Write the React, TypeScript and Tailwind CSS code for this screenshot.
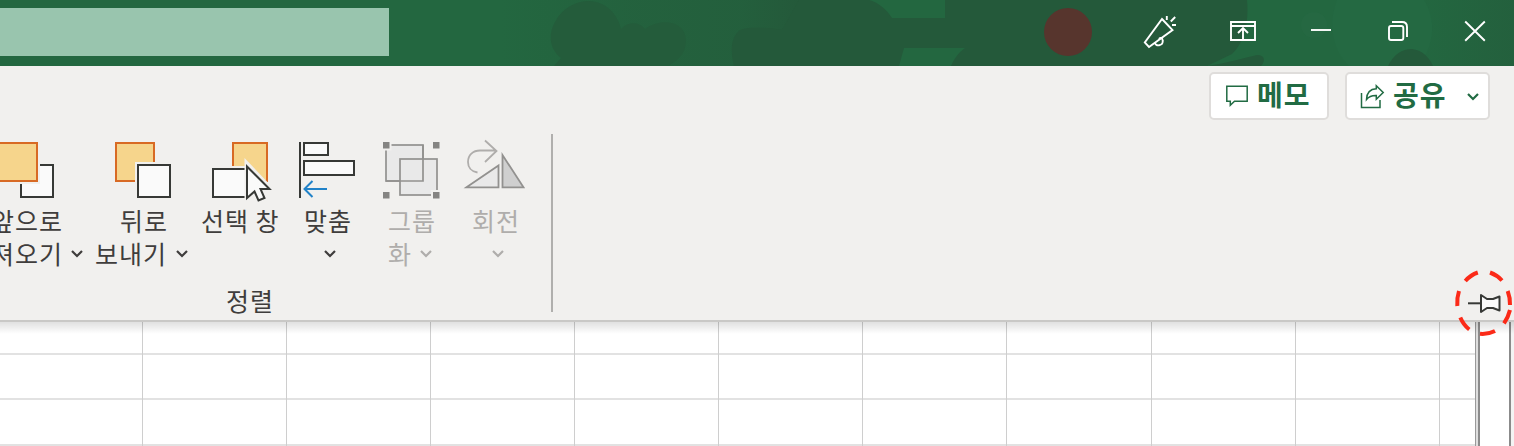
import type { ReactNode } from "react";

function TitlePattern() {
  return (
    <svg className="absolute inset-0" width="1514" height="66" viewBox="0 0 1514 66" aria-hidden="true">
      <defs>
        <linearGradient id="shade" x1="0" x2="1">
          <stop offset="0" stopColor="#24593a" stopOpacity="0" />
          <stop offset="0.45" stopColor="#24593a" stopOpacity="0.4" />
          <stop offset="0.8" stopColor="#24593a" stopOpacity="0.55" />
          <stop offset="1" stopColor="#24593a" stopOpacity="1" />
        </linearGradient>
        <linearGradient id="edge" x1="0" x2="1">
          <stop offset="0" stopColor="#24593a" stopOpacity="0" />
          <stop offset="1" stopColor="#24593a" stopOpacity="0.5" />
        </linearGradient>
      </defs>
      <rect x="500" width="300" height="66" fill="url(#shade)" />
      <path d="M554 66 L561 58 C548 48 549 32 555 22 C562 8 576 1 589 1 C606 1 618 15 621 29 C629 21 639 22 645 29 C653 23 664 21 671 23 C684 25 689 38 684 51 C680 59 673 63 668 66Z" fill="#245c3b" />
      <path d="M734 66 C730 50 731 37 740 30 C748 26 770 28 782 30 L799 0 H869 C878 2 887 10 892 18 H945 V0 H1247 C1249 20 1245 42 1232 54 L1207 66 H951 C954 59 959 52 965 48 H904 L899 66Z" fill="#24593a" />
      <path d="M1207 66 C1227 63 1244 58 1257 55 C1266 55 1265 62 1261 66Z" fill="#24593a" />
      <circle cx="1314" cy="25" r="13" fill="#286c46" opacity="0.4" />
      <rect x="1420" width="94" height="66" fill="url(#edge)" />
      <path d="M1337 0 C1329 20 1330 48 1349 66 H1418 C1434 48 1437 20 1424 0Z" fill="#246942" />
      <path d="M1388 66 C1394 54 1402 49 1412 49 C1422 50 1429 57 1433 66Z" fill="#24593a" />
    </svg>
  );
}

function Chevron({ className = "" }: { className?: string }) {
  return (
    <svg className={className} width="14" height="10" viewBox="0 0 14 10" fill="none" stroke="currentColor" strokeWidth="2.2">
      <path d="M2 2 L7 7 L12 2" />
    </svg>
  );
}

function TitleBar() {
  return (
    <header className="relative h-[66px] shrink-0 bg-[#236740]">
      <TitlePattern />
      <div className="relative flex h-full pt-2">
        <div className="h-12 w-[389px] bg-[#99c5ae]" />
        <div className="ml-[655px] size-12 rounded-full bg-[#57352d]" />
        <svg className="ml-12" width="40" height="48" viewBox="1140 8 40 48" fill="none" stroke="#fff" strokeWidth="1.9">
          <path d="M1162 19 L1172.5 30 L1149 47 L1144.8 42.5Z" />
          <path d="M1155 42.5 C1155 47 1163.5 46 1162.7 40.5 C1162.4 37.8 1160.5 37.3 1159 39" />
          <path d="M1166.8 16 V20 M1170.8 21.5 L1175.2 17 M1172 25 H1176" />
        </svg>
        <svg className="ml-12" width="30" height="48" viewBox="1228 8 30 48" fill="none" stroke="#fff" strokeWidth="1.9">
          <path d="M1231 22 H1255 V40 H1231Z M1231 26 H1255 M1243 39.5 V28.5 M1238 33 L1243 28 L1248 33" />
        </svg>
        <svg className="ml-[50px]" width="28" height="48" viewBox="1308 8 28 48" stroke="#fff" strokeWidth="1.9">
          <path d="M1311 30 H1331" />
        </svg>
        <svg className="ml-12" width="30" height="48" viewBox="1384 8 30 48" fill="none" stroke="#fff" strokeWidth="1.9">
          <rect x="1389" y="26" width="14.3" height="14" rx="2" />
          <path d="M1392 22 H1402 Q1407 22 1407 27 V37" />
        </svg>
        <svg className="ml-12" width="28" height="48" viewBox="1462 8 28 48" stroke="#fff" strokeWidth="1.9">
          <path d="M1465.2 21.5 L1484.8 40.8 M1484.8 21.5 L1465.2 40.8" />
        </svg>
      </div>
    </header>
  );
}

function TopActions() {
  return (
    <div className="flex h-[54px] justify-end gap-4 pt-1.5 pr-6 text-[28px] leading-[42px] font-bold tracking-[1px] text-[#216b43]">
      <button className="flex h-12 w-[120px] items-center rounded-[5px] border-2 border-[#dfdddb] bg-white pl-3.5">
        <svg width="24" height="24" viewBox="1225 84 24 24" fill="none" stroke="currentColor" strokeWidth="1.5">
          <path d="M1226.8 86.3 H1247.2 V101.2 H1234.5 L1230.3 105.3 V101.2 H1226.8Z" />
        </svg>
        <span className="ml-[8px] pb-[4px] whitespace-nowrap">메모</span>
      </button>
      <button className="flex h-12 w-[145px] items-center rounded-[5px] border-2 border-[#dfdddb] bg-white pl-3">
        <svg width="26" height="26" viewBox="1359 83 26 26" fill="none" stroke="currentColor" strokeWidth="1.5">
          <path d="M1361.5 93 V107.5 H1380 V100" />
          <path d="M1366.5 99.5 C1366.8 92.5 1370.5 89 1376.3 88.8 V85.8 L1383.2 92.5 L1376.3 99.2 V95.5 C1371.5 95.3 1368.7 96.8 1366.5 99.5Z" />
        </svg>
        <span className="ml-[8px] pb-[4px] whitespace-nowrap">공유</span>
        <Chevron className="mt-0.5 ml-[19px]" />
      </button>
    </div>
  );
}

function Tool({ className, icon, children }: { className: string; icon: ReactNode; children: ReactNode }) {
  return (
    <button className={`flex shrink-0 flex-col items-start text-left ${className}`}>
      {icon}
      <span className="block whitespace-pre leading-[33px]">{children}</span>
    </button>
  );
}

function ArrangeGroup() {
  return (
    <section className="flex h-[200px] text-[25px] tracking-[1px] text-[#3f3d3c]">
      <div className="flex w-[551px] flex-col overflow-hidden">
        <div className="flex h-[162px] pt-[14px]">
          <Tool
            className="-ml-[35px] w-[130px]"
            icon={
              <svg width="130" height="70" viewBox="-35 134 130 70" strokeWidth="2">
                <rect x="21" y="165" width="32" height="32" fill="#fafafa" stroke="#373936" />
                <rect x="-20" y="140" width="60" height="44" fill="#f1f0ee" />
                <rect x="-1" y="143" width="38" height="38" fill="#f6d58c" stroke="#d86a24" />
              </svg>
            }
          >
            <span className="block w-[98px] text-right">앞으로</span>
            <span className="flex h-8 items-center">
              <span className="w-[98px] text-right">가져오기</span>
              <Chevron className="mt-0.5 ml-[7px]" />
            </span>
          </Tool>
          <Tool
            className="w-[105px]"
            icon={
              <svg width="105" height="70" viewBox="95 134 105 70" strokeWidth="2">
                <rect x="116" y="143" width="38" height="38" fill="#f6d58c" stroke="#d86a24" />
                <rect x="135" y="162" width="40" height="40" fill="#f1f0ee" />
                <rect x="138" y="165" width="32" height="32" fill="#fafafa" stroke="#373936" />
              </svg>
            }
          >
            <span className="block pl-[25px]">뒤로</span>
            <span className="flex h-8 items-center">
              <span className="w-[72px]">보내기</span>
              <Chevron className="mt-0.5 ml-[8px]" />
            </span>
          </Tool>
          <Tool
            className="w-[96px]"
            icon={
              <svg width="96" height="70" viewBox="200 134 96 70" strokeWidth="2">
                <rect x="233" y="143" width="34" height="38" fill="#f6d58c" stroke="#d86a24" />
                <path d="M209 166 H249 V200 H209Z" fill="#f1f0ee" />
                <rect x="213" y="169" width="34" height="28" fill="#fafafa" stroke="#373936" />
                <path d="M244.5 158 L275 190 H264 L269 201 L257 205 L252 195 L244.5 202Z" fill="#f1f0ee" />
                <path d="M247 166.5 L269.5 189 H260.5 L264.5 198 L258.5 200.5 L254.5 191.5 L247 198Z" fill="#fafafa" stroke="#373936" />
              </svg>
            }
          >
            <span className="block pl-px">선택 창</span>
          </Tool>
          <Tool
            className="w-[84px]"
            icon={
              <svg width="84" height="70" viewBox="296 134 84 70" fill="#fafafa" stroke="#373936" strokeWidth="2">
                <path d="M300 142 V198" />
                <rect x="304" y="143" width="24" height="12" />
                <rect x="304" y="161" width="50" height="14" />
                <path d="M327 189 H304 M312.5 181 L304.5 189 L312.5 197" fill="none" stroke="#2182c8" />
              </svg>
            }
          >
            <span className="block pl-[8px]">맞춤</span>
            <span className="flex h-8 items-center pl-[27px]">
              <Chevron className="mt-0.5" />
            </span>
          </Tool>
          <Tool
            className="w-[80px] text-[#afadab]"
            icon={
              <svg width="80" height="70" viewBox="380 134 80 70" fill="#e9e9e9" stroke="#92918f" strokeWidth="1.7">
                <rect x="386" y="145" width="37" height="36" />
                <rect x="400" y="159" width="37" height="36" />
                <path d="M386 181 H423 V145" fill="none" />
                <g fill="#858482" stroke="#f1f0ee" strokeWidth="4" paintOrder="stroke">
                  <path d="M383 142 h6.5 v6.5 h-6.5Z M433 142 h6.5 v6.5 h-6.5Z M383 192 h6.5 v6.5 h-6.5Z M433 192 h6.5 v6.5 h-6.5Z" />
                </g>
              </svg>
            }
          >
            <span className="block pl-[8px]">그룹</span>
            <span className="flex h-8 items-center pl-[8px]">
              <span className="w-6">화</span>
              <Chevron className="mt-0.5 ml-[7px]" />
            </span>
          </Tool>
          <Tool
            className="w-[80px] text-[#afadab]"
            icon={
              <svg width="80" height="70" viewBox="460 134 80 70" fill="none" strokeWidth="1.8">
                <path d="M477.5 172.5 C471 171.5 468 167 468 162 C468 155 473 150.5 480 150.5 H496 M485 140.5 L496.5 151 L485 162" stroke="#afadab" />
                <path d="M466.5 187.3 L498.5 165.5 V187.3Z" fill="#e9e9e9" stroke="#92918f" />
                <path d="M502.5 155 V187.3 H523.5Z" fill="#cfcfcf" stroke="#92918f" />
              </svg>
            }
          >
            <span className="block pl-[12px]">회전</span>
            <span className="flex h-8 items-center pl-[31px]">
              <Chevron className="mt-0.5" />
            </span>
          </Tool>
        </div>
        <div className="pl-[226px] leading-10">정렬</div>
      </div>
      <div className="mt-[14px] h-[178px] w-[2px] bg-[#b0afad]" />
    </section>
  );
}

function PinButton() {
  return (
    <svg className="absolute top-[266px] right-0 z-10" width="64" height="76" viewBox="1450 266 64 76" fill="none">
      <path d="M1468 303.3 H1480" stroke="#373936" strokeWidth="2" />
      <path d="M1481 295 L1487 299 H1493 L1499.5 296.5 V310.5 L1493 308 H1487 L1481 312Z" fill="#fafafa" stroke="#373936" strokeWidth="2" strokeLinejoin="round" />
      <g stroke="#fb2a18" strokeWidth="4">
        <path d="M1465.3 281 Q1470.5 275 1477.8 272.5" />
        <path d="M1490 272.5 Q1497 275 1502 280.5" />
        <path d="M1459 291 Q1456.7 298 1457.3 306" />
        <path d="M1507.7 291 Q1510.3 298 1510 305" />
        <path d="M1460.3 317.5 Q1463.5 325 1469.3 329.5" />
        <path d="M1510 310 Q1508.3 317 1504 323.3" />
        <path d="M1480 333.8 Q1488 334.5 1495 331" />
      </g>
    </svg>
  );
}

const columns = [
  "w-[143px]", "w-[144px]", "w-[144px]", "w-[144px]", "w-[144px]",
  "w-[144px]", "w-[144px]", "w-[145px]", "w-[144px]", "w-[144px]",
];
const rows = ["h-[33px]", "h-[45px]", "h-[46px]"];

function Sheet() {
  return (
    <main className="relative flex h-[124px] bg-white">
      <div className="w-[1475px]">
        {rows.map((height, r) => (
          <div key={r} className={`flex border-b-2 border-[#e2e2e2] ${height}`}>
            {columns.map((width, c) => (
              <div key={c} className={`-mb-[2px] shrink-0 border-r border-[#cecece] ${width}`} />
            ))}
          </div>
        ))}
      </div>
      <div className="flex w-[39px] bg-[#f4f4f4]">
        <div className="w-px bg-[#999]" />
        <div className="w-[2px] bg-[#dedede]" />
        <div className="w-[33px] border-x-2 border-[#8b8b8b] bg-white" />
      </div>
      <div className="absolute inset-x-0 top-0 h-3 bg-linear-to-b from-black/12 to-transparent" />
    </main>
  );
}

export default function App() {
  return (
    <div className="relative flex h-[446px] w-[1514px] flex-col overflow-hidden bg-[#f1f0ee] font-['Noto_Sans_CJK_KR',sans-serif]">
      <TitleBar />
      <div className="h-[256px] shrink-0 border-b-2 border-[#c9c8c6]">
        <TopActions />
        <ArrangeGroup />
      </div>
      <Sheet />
      <PinButton />
    </div>
  );
}
